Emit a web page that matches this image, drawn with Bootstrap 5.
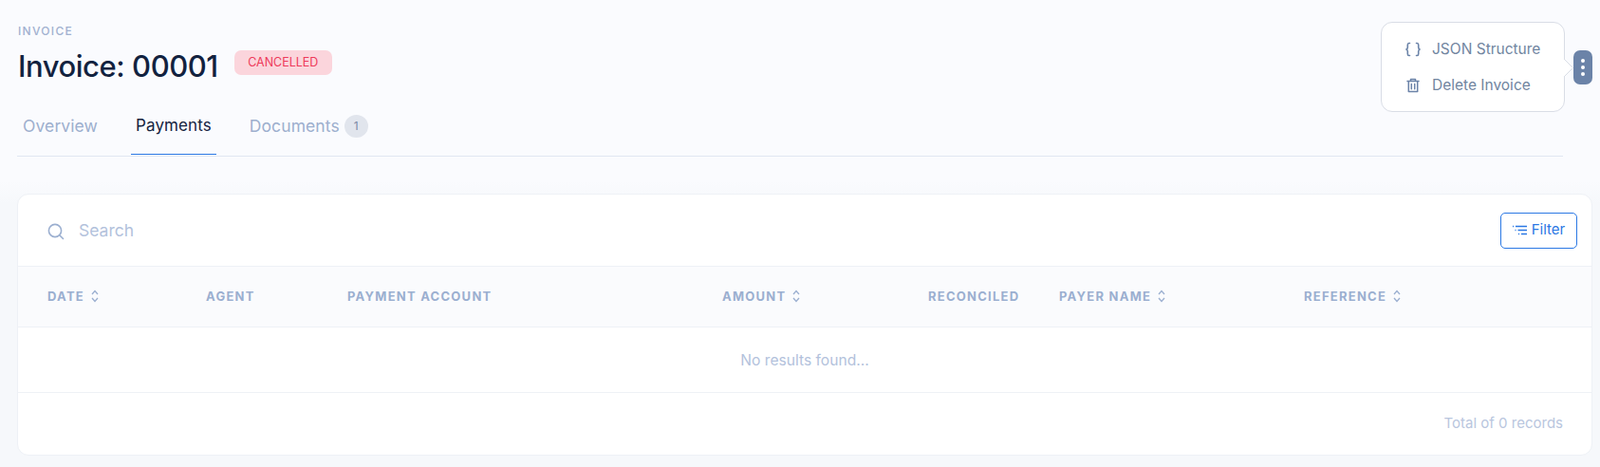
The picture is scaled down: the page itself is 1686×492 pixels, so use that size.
<!DOCTYPE html>
<html lang="en">
<head>
<meta charset="utf-8">
<title>Invoice</title>
<link href="https://cdn.jsdelivr.net/npm/bootstrap@5.3.0/dist/css/bootstrap.min.css" rel="stylesheet">
<style>
body{background:linear-gradient(#fafbfe 0,#fafbfe 190px,#f6f8fb 215px);font-family:"Inter","Liberation Sans",sans-serif;height:492px;overflow:hidden;position:relative;padding:0 8px 0 18px}
.eyebrow{font-size:12px;letter-spacing:1.3px;color:#a1b1d0;font-weight:500;line-height:14px;padding-top:26px;margin-left:1px}
.page-title{font-size:31px;font-weight:500;line-height:40px;color:#12223f;margin:10px 0 0 1px;letter-spacing:-.45px}
.state-pill{background:#fbd5dc;color:#ee3a5a;font-size:12.5px;font-weight:400;border-radius:7px;width:103px;height:26px;margin:2px 0 0 17px}
.tab-bar{border-bottom:1px solid #e0e7f2;margin-top:16px;margin-right:31px;height:59px;gap:30px;padding-left:1px}
.tab-item{font-size:17.5px;letter-spacing:.1px;color:#9dafce;padding:0 5px 3px;height:57px;text-decoration:none}
.tab-on{color:#15233f;border-bottom:1px solid #2b78e4;font-size:17px}
.count-dot{width:25px;height:24px;background:#e1e5ed;color:#7b8aa5;font-size:12px;border-radius:50%;margin-left:5px}
.menu-pop{position:absolute;left:1455px;top:23px;width:194px;height:95px;background:#fff;border:1px solid #d9dde6;border-radius:12px;padding-left:24px}
.menu-pop::after{content:"";position:absolute;left:192px;top:38px;width:10px;height:19px;background:#fff;clip-path:polygon(0 0,100% 50%,0 100%)}
.menu-tail{position:absolute;left:192px;top:38px;z-index:1}
.menu-row{font-size:15.5px;color:#71859f;height:38px;gap:11px}
.more-btn{position:absolute;left:1658px;top:53px;width:20px;height:36px;background:#6b83a8;border-radius:7px;gap:3px}
.more-btn i{width:4px;height:4px;border-radius:50%;background:#fff;display:block}
.data-panel{margin-top:39px;background:#fff;border:1px solid #eef1f6;border-radius:12px;height:276px;width:1660px;overflow:hidden}
.panel-top{height:75px;padding:0 15px 0 31px}
.search-wrap{padding-top:2px}
.search-hint{font-size:17.5px;color:#b3c2dc;margin-left:15px}
.filter-btn{width:81px;height:38px;border:1px solid #2b78e4;border-radius:5px;color:#2b78e4;font-size:15px;background:#fff;gap:4px;padding:0}
.data-table{margin:0;table-layout:fixed;width:100%}
.data-table th{background:#fafbfd;height:64px;font-size:13px;font-weight:700;letter-spacing:1.25px;color:#9bafd0;border-top:1px solid #eef1f6;border-bottom:1px solid #eef1f6;padding:0;vertical-align:middle;white-space:nowrap}
.data-table th.has-sort{padding-top:1px}
.data-table th.first-col{padding-left:31px}
.sort-ico{margin-left:7px;vertical-align:-2px}
.empty-row td{height:69px;text-align:center;font-size:15.6px;color:#b3c2dc;border-bottom:1px solid #eef1f6;padding:2px 0 0;vertical-align:middle}
.panel-foot{height:65px;padding-right:30px;font-size:15px;color:#b9c6de}
</style>
</head>
<body>
<div class="eyebrow">INVOICE</div>
<div class="d-flex align-items-center">
  <h1 class="page-title">Invoice: 00001</h1>
  <span class="state-pill d-inline-flex align-items-center justify-content-center">CANCELLED</span>
</div>
<nav class="tab-bar d-flex">
  <a class="tab-item d-flex align-items-center" href="#">Overview</a>
  <a class="tab-item tab-on d-flex align-items-center" href="#">Payments</a>
  <a class="tab-item d-flex align-items-center" href="#">Documents<span class="count-dot d-inline-flex align-items-center justify-content-center">1</span></a>
</nav>

<div class="menu-pop d-flex flex-column justify-content-center">
  <div class="menu-row d-flex align-items-center">
    <svg width="18" height="16" viewBox="0 0 18 16" fill="none" stroke="#6b83a8" stroke-width="1.6" stroke-linecap="round"><path d="M5.5 1.5H4.7C3.5 1.5 3.3 2.3 3.3 3.2V6C3.3 7 2.7 7.8 1.5 8C2.7 8.2 3.3 9 3.3 10V12.8C3.3 13.7 3.5 14.5 4.7 14.5H5.5"/><path d="M12.5 1.5H13.3C14.5 1.5 14.7 2.3 14.7 3.2V6C14.7 7 15.3 7.8 16.5 8C15.3 8.2 14.7 9 14.7 10V12.8C14.7 13.7 14.5 14.5 13.3 14.5H12.5"/></svg>
    <span>JSON Structure</span>
  </div>
  <div class="menu-row d-flex align-items-center">
    <svg width="18" height="16" viewBox="0 0 18 16" fill="none" stroke="#6b83a8" stroke-width="1.5" stroke-linecap="round" stroke-linejoin="round"><path d="M3 3.5H15M6.5 3.5V1.5H11.5V3.5M4.3 3.5V14.5H13.7V3.5M7.3 6.5V11.8M10.7 6.5V11.8"/></svg>
    <span>Delete Invoice</span>
  </div>
  <svg class="menu-tail" width="10" height="19" viewBox="0 0 10 19" fill="none" stroke="#d9dde6"><path d="M0 0L9.5 9.5L0 19"/></svg>
</div>
<button class="more-btn btn d-flex flex-column align-items-center justify-content-center p-0 border-0" aria-label="More"><i></i><i></i><i></i></button>

<section class="data-panel">
  <div class="panel-top d-flex align-items-center justify-content-between">
    <div class="search-wrap d-flex align-items-center">
      <svg width="18" height="18" viewBox="0 0 18 18" fill="none" stroke="#9bafd0" stroke-width="1.6" stroke-linecap="round"><circle cx="8" cy="8" r="6.6"/><path d="M13 13L16.5 16.5"/></svg>
      <span class="search-hint">Search</span>
    </div>
    <button class="filter-btn btn d-flex align-items-center justify-content-center">
      <svg width="16" height="12" viewBox="0 0 16 12" fill="none" stroke="#2b78e4" stroke-width="1.6"><path d="M0 1.5H1M3 1.5H15M2.5 5.5H3.5M5.5 5.5H15M6 9.5H7M9 9.5H15"/></svg>
      Filter
    </button>
  </div>
  <table class="data-table">
    <colgroup><col style="width:198px"><col style="width:149px"><col style="width:395px"><col style="width:217px"><col style="width:138px"><col style="width:258px"><col></colgroup>
    <thead>
      <tr>
        <th class="first-col has-sort">DATE<svg class="sort-ico" width="8" height="14" viewBox="0 0 8 14" fill="none" stroke="#9bafd0" stroke-width="1.3"><path d="M1 5L4 1.5L7 5M1 9L4 12.5L7 9"/></svg></th>
        <th>AGENT</th>
        <th>PAYMENT ACCOUNT</th>
        <th class="has-sort">AMOUNT<svg class="sort-ico" width="8" height="14" viewBox="0 0 8 14" fill="none" stroke="#9bafd0" stroke-width="1.3"><path d="M1 5L4 1.5L7 5M1 9L4 12.5L7 9"/></svg></th>
        <th>RECONCILED</th>
        <th class="has-sort">PAYER NAME<svg class="sort-ico" width="8" height="14" viewBox="0 0 8 14" fill="none" stroke="#9bafd0" stroke-width="1.3"><path d="M1 5L4 1.5L7 5M1 9L4 12.5L7 9"/></svg></th>
        <th class="has-sort">REFERENCE<svg class="sort-ico" width="8" height="14" viewBox="0 0 8 14" fill="none" stroke="#9bafd0" stroke-width="1.3"><path d="M1 5L4 1.5L7 5M1 9L4 12.5L7 9"/></svg></th>
      </tr>
    </thead>
    <tbody><tr class="empty-row"><td colspan="7">No results found...</td></tr></tbody>
  </table>
  <div class="panel-foot d-flex align-items-center justify-content-end">Total of 0 records</div>
</section>
<script src="https://cdn.jsdelivr.net/npm/bootstrap@5.3.0/dist/js/bootstrap.bundle.min.js"></script>
</body>
</html>
